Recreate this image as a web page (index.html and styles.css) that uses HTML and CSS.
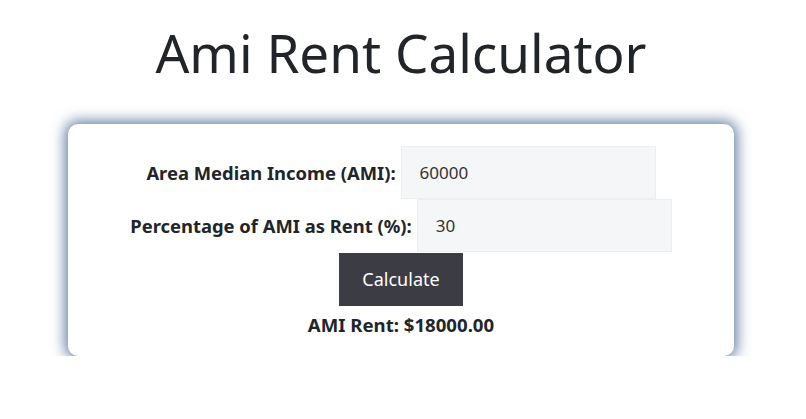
FILE: index.html
```html
<!DOCTYPE html>
<html lang="en">
<head>
    <meta charset="UTF-8">
    <meta name="viewport" content="width=device-width, initial-scale=1.0">
    <title>Ami Rent Calculator</title>
    <link rel="stylesheet" href="styles.css">
</head>
<body>

    <h1>Ami Rent Calculator</h1>

    <div class="calc-card">
        <div class="form-row">
            <label for="ami">Area Median Income (AMI):</label>
            <input type="text" id="ami" value="60000">
        </div>
        <div class="form-row">
            <label for="percent">Percentage of AMI as Rent (%):</label>
            <input type="text" id="percent" value="30">
        </div>
        <button onclick="calculateRent()">Calculate</button>
        <p id="result">AMI Rent: $18000.00</p>
    </div>

    <script>
        function calculateRent() {
            const ami = parseFloat(document.getElementById("ami").value) || 0;
            const percent = parseFloat(document.getElementById("percent").value) || 0;
            const rent = ami * percent / 100;
            document.getElementById("result").textContent = "AMI Rent: $" + rent.toFixed(2);
        }
    </script>
</body>
</html>
```

FILE: styles.css
```css
body {
    font-family: "Noto Sans", "Open Sans", sans-serif;
    margin: 0;
    padding: 0 4px 0 0;
    background: white;
    color: #212529;
    text-align: center;
}

h1 {
    font-size: 53px;
    font-weight: 400;
    margin: 21px 0 39px;
    line-height: 1.2;
}

.calc-card {
    width: 666px;
    margin: 0 auto;
    box-sizing: border-box;
    padding: 22px 20px 19px;
    background: white;
    border-radius: 10px;
    box-shadow: 0 0 14px 3px rgba(60, 95, 140, 0.8);
}

.form-row {
    display: flex;
    justify-content: center;
    align-items: center;
    gap: 5px;
}

label {
    font-weight: 700;
    font-size: 18.4px;
}

input {
    width: 255px;
    height: 53px;
    box-sizing: border-box;
    padding: 0 18px;
    font-family: inherit;
    font-size: 17px;
    color: #333;
    background: #f5f6f8;
    border: 1px solid #eceef1;
    border-radius: 0;
    outline: none;
}

button {
    margin-top: 1px;
    width: 124px;
    height: 53px;
    font-family: inherit;
    font-size: 18px;
    color: white;
    background: #3c3c44;
    border: none;
    cursor: pointer;
}

#result {
    margin: 6px 0 0;
    font-weight: 700;
    font-size: 18.6px;
}
```
